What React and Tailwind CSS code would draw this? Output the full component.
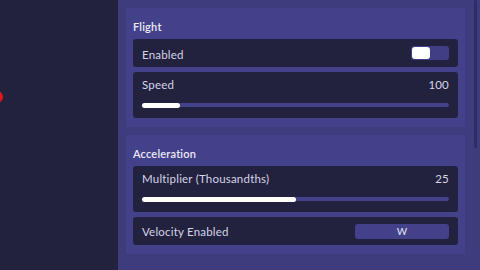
const font = { fontFamily: "Lato, 'Open Sans', sans-serif" };

function Slider({ pct }) {
  return (
    <div className="relative mt-[11px] h-[4px] rounded-full bg-[#44428a]">
      <div className="absolute left-0 top-[-0.5px] h-[5px] rounded-full bg-white" style={{ width: pct + "%" }} />
    </div>
  );
}

function Row({ children, tall }) {
  return (
    <div className={"rounded-[3px] bg-[#22223f] px-[9px] " + (tall ? "pt-[6px] pb-[11px]" : "h-[28px] flex items-center justify-between")}>
      {children}
    </div>
  );
}

function SliderRow({ label, value, pct }) {
  return (
    <Row tall>
      <div className="flex items-center justify-between h-[14px] tracking-[0.2px]">
        <span>{label}</span>
        <span>{value}</span>
      </div>
      <Slider pct={pct} />
    </Row>
  );
}

function Section({ title, children }) {
  return (
    <div className="bg-[#43418a] px-[7px] pt-[12px] pb-[9px]">
      <div className="text-[11px] font-semibold text-[#eceaf6] mb-[5px] leading-[14px] tracking-[0.2px]">{title}</div>
      <div className="flex flex-col gap-[5px]">{children}</div>
    </div>
  );
}

export default function App() {
  return (
    <div className="flex w-[480px] h-[270px] overflow-hidden text-[11.5px] text-[#d6d4e8]" style={font}>
      <div className="relative w-[118px] bg-[#22223f]">
        <div className="absolute left-[-9px] top-[91px] w-[12px] h-[12px] rounded-full bg-[#e0161b]" />
      </div>
      <div className="flex flex-1 bg-[#3e3c7c]">
        <div className="flex-1 flex flex-col gap-[8px] pl-[8px] pt-[8px]">
          <Section title="Flight">
            <Row>
              <span className="mt-[3px] tracking-[0.2px]">Enabled</span>
              <div className="w-[38px] h-[14px] rounded-[3px] bg-[#403e84] p-[1px]">
                <div className="w-[18px] h-[12px] rounded-[3px] bg-white" />
              </div>
            </Row>
            <SliderRow label="Speed" value="100" pct={12.4} />
          </Section>
          <Section title="Acceleration">
            <SliderRow label="Multiplier (Thousandths)" value="25" pct={50} />
            <Row>
              <span className="mt-[2px] tracking-[0.2px]">Velocity Enabled</span>
              <div className="w-[94px] h-[15px] rounded-[3px] bg-[#43418a] flex items-center justify-center text-[10px] font-semibold">W</div>
            </Row>
          </Section>
        </div>
        <div className="w-[15px] flex justify-center pl-[6px]">
          <div className="w-[3px] h-[148px] bg-[#2e2c66] rounded-full" />
        </div>
      </div>
    </div>
  );
}
